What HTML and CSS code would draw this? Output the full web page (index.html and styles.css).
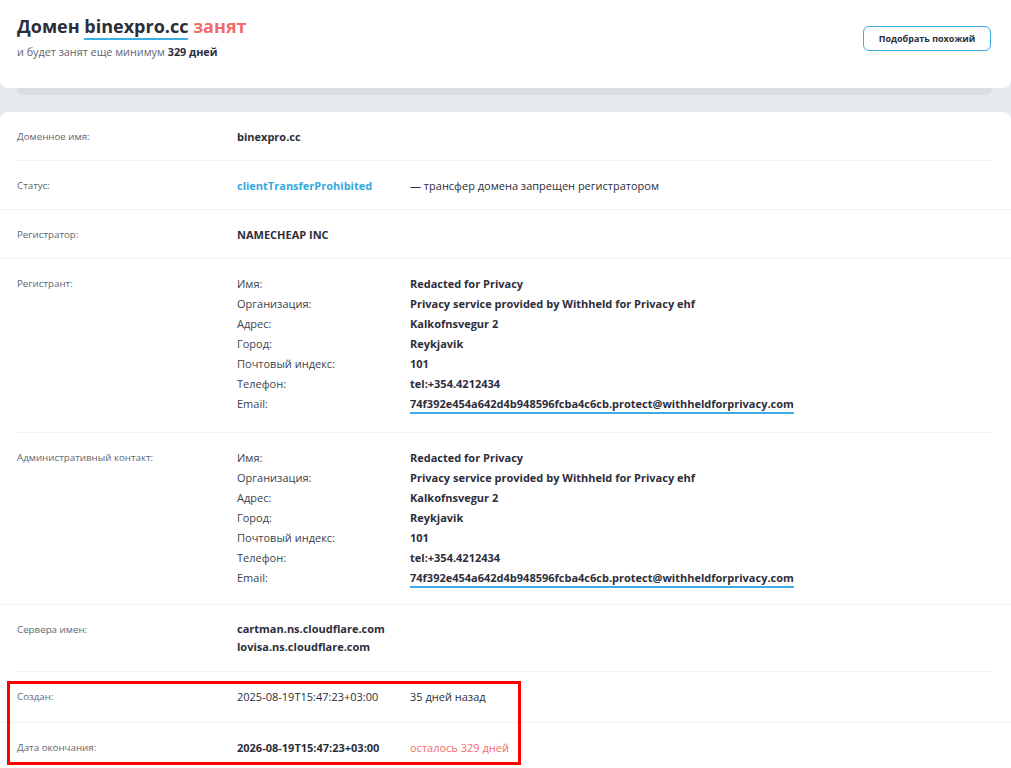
FILE: index.html
```html
<!DOCTYPE html>
<html lang="ru">
<head>
<meta charset="utf-8">
<title>binexpro.cc</title>
<link rel="stylesheet" href="styles.css">
</head>
<body>
<header class="head">
  <div class="head-text">
    <h1 class="title">Домен <span class="dom">binexpro.cc</span> <span class="busy">занят</span></h1>
    <p class="sub">и будет занят еще минимум <b>329 дней</b></p>
  </div>
  <button class="btn">Подобрать похожий</button>
</header>
<div class="strip"></div>
<main class="card">
  <div class="row sep-in">
    <div class="lbl">Доменное имя:</div>
    <div class="val"><b>binexpro.cc</b></div>
  </div>
  <div class="row sep-full">
    <div class="lbl">Статус:</div>
    <div class="val pair"><b class="blue">clientTransferProhibited</b><span>— трансфер домена запрещен регистратором</span></div>
  </div>
  <div class="row sep-full">
    <div class="lbl">Регистратор:</div>
    <div class="val"><b>NAMECHEAP INC</b></div>
  </div>
  <div class="row sep-in reg">
    <div class="lbl">Регистрант:</div>
    <div class="val grid">
      <span>Имя:</span><b>Redacted for Privacy</b>
      <span>Организация:</span><b>Privacy service provided by Withheld for Privacy ehf</b>
      <span>Адрес:</span><b>Kalkofnsvegur 2</b>
      <span>Город:</span><b>Reykjavik</b>
      <span>Почтовый индекс:</span><b>101</b>
      <span>Телефон:</span><b>tel:+354.4212434</b>
      <span>Email:</span><b><span class="mail">74f392e454a642d4b948596fcba4c6cb.protect@withheldforprivacy.com</span></b>
    </div>
  </div>
  <div class="row sep-full adm">
    <div class="lbl">Административный контакт:</div>
    <div class="val grid">
      <span>Имя:</span><b>Redacted for Privacy</b>
      <span>Организация:</span><b>Privacy service provided by Withheld for Privacy ehf</b>
      <span>Адрес:</span><b>Kalkofnsvegur 2</b>
      <span>Город:</span><b>Reykjavik</b>
      <span>Почтовый индекс:</span><b>101</b>
      <span>Телефон:</span><b>tel:+354.4212434</b>
      <span>Email:</span><b><span class="mail">74f392e454a642d4b948596fcba4c6cb.protect@withheldforprivacy.com</span></b>
    </div>
  </div>
  <div class="row sep-in ns">
    <div class="lbl">Сервера имен:</div>
    <div class="val"><b>cartman.ns.cloudflare.com</b><b>lovisa.ns.cloudflare.com</b></div>
  </div>
  <div class="dates">
    <div class="row sep-full created">
      <div class="lbl">Создан:</div>
      <div class="val pair"><span class="dark">2025-08-19T15:47:23+03:00</span><span class="dark">35 дней назад</span></div>
    </div>
    <div class="row">
      <div class="lbl">Дата окончания:</div>
      <div class="val pair"><b>2026-08-19T15:47:23+03:00</b><span class="red">осталось 329 дней</span></div>
    </div>
    <div class="mark"></div>
  </div>
</main>
</body>
</html>
```
FILE: styles.css
```css
* { box-sizing: border-box; }
html, body { margin: 0; padding: 0; }
body {
  background: #e6eaee;
  font-family: "Open Sans", "Noto Sans", sans-serif;
  color: #2c2e3b;
  width: 1011px;
  overflow: hidden;
}
.head {
  background: #fff;
  height: 88px;
  border-radius: 0 0 8px 8px;
  display: flex;
  justify-content: space-between;
  align-items: flex-start;
  padding: 13px 20px 0 17px;
}
.title {
  margin: 0;
  font-size: 18px;
  font-weight: 700;
  line-height: 26px;
  color: #2c2e3b;
}
.dom { border-bottom: 2px solid #3aaee0; }
.busy { color: #f26c6c; }
.sub {
  margin: 6px 0 0;
  font-size: 10.8px;
  color: #5f6672;
  line-height: 14px;
}
.sub b { color: #2c2e3b; }
.btn {
  margin-top: 13px;
  width: 128px;
  height: 25px;
  border: 1px solid #3aaee0;
  border-radius: 6px;
  background: #fff;
  font-family: inherit;
  font-size: 9px;
  font-weight: 700;
  color: #2c2e3b;
  padding: 0;
}
.strip {
  height: 7px;
  margin: 0 19px 0 17px;
  background: #d9dee3;
  border-radius: 0 0 6px 6px;
}
.card {
  margin-top: 17px;
  background: #fff;
  border-radius: 8px 8px 0 0;
  min-height: 700px;
}
.row {
  display: flex;
  padding: 15px 0 13px 17px;
  line-height: 20px;
  border-bottom: 1px solid transparent;
}
.row.sep-in {
  border-bottom-color: #f1f3f5;
  margin: 0 19px 0 17px;
  padding-left: 0;
}
.row.sep-full { border-bottom-color: #f1f3f5; }
.row.reg { padding-bottom: 18px; }
.row.adm { padding-bottom: 16px; }
.row.ns { padding-bottom: 15px; }
.row.created { padding-bottom: 15px; }
.lbl {
  width: 220px;
  flex: none;
  font-size: 9.75px;
  color: #5f6672;
}
.val {
  font-size: 11px;
  display: flex;
  flex-direction: column;
}
.ns .val { line-height: 18px; }
.val b { font-weight: 700; color: #2c2e3b; }
.pair { flex-direction: row; }
.pair > *:first-child { width: 173px; flex: none; }
.blue { color: #35a9dc !important; }
.dark { color: #2c2e3b; }
.red { color: #f26c6c; }
.grid {
  display: grid;
  grid-template-columns: 173px auto;
  grid-auto-rows: 20px;
}
.grid > span { color: #3c3f4b; }
.mail { border-bottom: 2px solid #3aaee0; padding-bottom: 1px; }
.dates { position: relative; }
.mark {
  position: absolute;
  left: 7px;
  top: 9px;
  width: 514px;
  height: 84px;
  border: 3px solid #ff0000;
  pointer-events: none;
}
```
